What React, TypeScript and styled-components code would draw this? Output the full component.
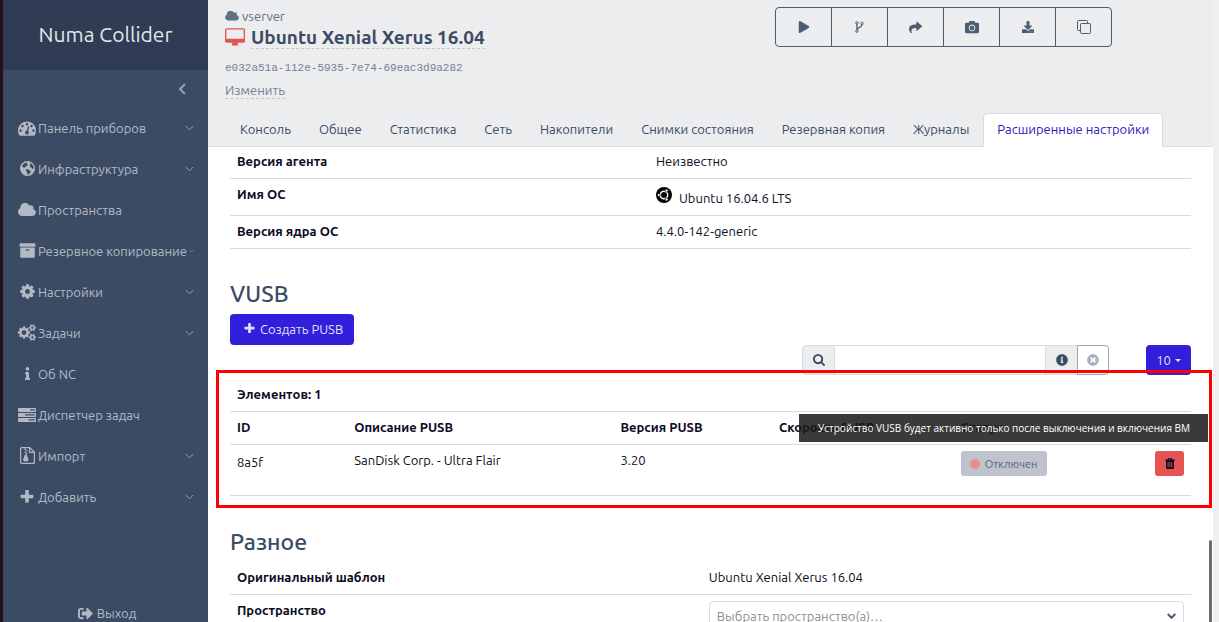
import React from "react";
import styled, { createGlobalStyle, css } from "styled-components";
import {
  FaCamera,
  FaDownload,
  FaInfo,
  FaInfoCircle,
  FaPlay,
  FaShare,
  FaSignOutAlt,
  FaTimesCircle,
} from "react-icons/fa";

const GlobalStyle = createGlobalStyle`
  *, *::before, *::after { box-sizing: border-box; }
  body {
    margin: 0;
    font-family: Ubuntu, "Noto Sans", sans-serif;
    font-size: 13px;
    line-height: 20px;
    color: #0d0c22;
    background: #ffffff;
  }
  button, input, select { font: inherit; color: inherit; margin: 0; }
  a { color: inherit; text-decoration: none; }
`;

/* ---------- icons ---------- */

const Glyph = styled.svg<{ $w: number; $h?: number }>`
  display: block;
  flex: none;
  width: ${(p) => p.$w}px;
  height: ${(p) => p.$h ?? p.$w}px;
  fill: currentColor;
`;

type IconProps = { w?: number; h?: number };

const DashboardIcon = ({ w = 18 }: IconProps) => (
  <Glyph $w={w} viewBox="0 0 1792 1792" aria-hidden="true">
    <path d="M384 1152q0-53-37.5-90.5t-90.5-37.5-90.5 37.5-37.5 90.5 37.5 90.5 90.5 37.5 90.5-37.5 37.5-90.5zm192-448q0-53-37.5-90.5t-90.5-37.5-90.5 37.5-37.5 90.5 37.5 90.5 90.5 37.5 90.5-37.5 37.5-90.5zm428 481l101-382q6-26-7.5-48.5t-38.5-29.5-48 6.5-30 39.5l-101 382q-60 5-107 43.5t-63 98.5q-20 77 20 146t117 89 146-20 89-117q16-60-6-117t-72-91zm660-33q0-53-37.5-90.5t-90.5-37.5-90.5 37.5-37.5 90.5 37.5 90.5 90.5 37.5 90.5-37.5 37.5-90.5zm-640-640q0-53-37.5-90.5t-90.5-37.5-90.5 37.5-37.5 90.5 37.5 90.5 90.5 37.5 90.5-37.5 37.5-90.5zm448 192q0-53-37.5-90.5t-90.5-37.5-90.5 37.5-37.5 90.5 37.5 90.5 90.5 37.5 90.5-37.5 37.5-90.5zm320 448q0 261-141 483-19 29-54 29h-1402q-35 0-54-29-141-221-141-483 0-182 71-348t191-286 286-191 348-71 348 71 286 191 191 286 71 348z" />
  </Glyph>
);

const GlobeIcon = () => (
  <Glyph $w={15} viewBox="0 0 16 16" aria-hidden="true">
    <circle cx="8" cy="8" r="8" />
    <g fill="#3c4b64">
      <path d="M3.200 3.600L5.200 2l2.600-.4-.6 1.600 1.300.5-1 1.500L6 5.600 5.200 7.200 3 6.600 2.200 5.200z" />
      <path d="M10.400 2.200l2.200.9 1.700 2.300.6 2.400-1.300.7-1-1.300-1.500-.4-.8-2 .8-1z" />
      <path d="M6.600 8.600l2.200.4 1.900 1.200 1.100 1.400-1.400 1.200-1.200 1.900-1 .3-.3-2.300L6.500 11z" />
    </g>
  </Glyph>
);

const CloudIcon = ({ w = 18, h = 14 }: IconProps) => (
  <Glyph $w={w} $h={h} viewBox="64 192 1936 1408" aria-hidden="true">
    <path d="M1984 1152q0 159-112.500 271.500t-271.500 112.500h-1088q-185 0-316.500-131.500t-131.500-316.500q0-132 71-241.500t187-163.500q-2-28-2-43 0-212 150-362t362-150q158 0 286.500 88t187.500 230q70-62 166-62 106 0 181 75t75 181q0 75-41 138 129 30 213 134.500t84 239.500z" />
  </Glyph>
);

const ArchiveIcon = () => (
  <Glyph $w={17} viewBox="0 0 1792 1792" aria-hidden="true">
    <path d="M1088 832q0-26-19-45t-45-19h-256q-26 0-45 19t-19 45 19 45 45 19h256q26 0 45-19t19-45zm576-192v960q0 26-19 45t-45 19h-1408q-26 0-45-19t-19-45v-960q0-26 19-45t45-19h1408q26 0 45 19t19 45zm64-448v256q0 26-19 45t-45 19h-1536q-26 0-45-19t-19-45v-256q0-26 19-45t45-19h1536q26 0 45 19t19 45z" />
  </Glyph>
);

const CogIcon = () => (
  <Glyph $w={17} viewBox="0 0 1792 1792" aria-hidden="true">
    <path d="M1152 896q0-106-75-181t-181-75-181 75-75 181 75 181 181 75 181-75 75-181zm512-109v222q0 12-8 23t-20 13l-185 28q-19 54-39 91 35 50 107 138 10 12 10 25t-9 23q-27 37-99 108t-94 71q-12 0-26-9l-138-108q-44 23-91 38-16 136-29 186-7 28-36 28h-222q-14 0-24.500-8.500t-11.500-21.500l-28-184q-49-16-90-37l-141 107q-10 9-25 9-14 0-25-11-126-114-165-168-7-10-7-23 0-12 8-23 15-21 51-66.500t54-70.500q-27-50-41-99l-183-27q-13-2-21-12.500t-8-23.500v-222q0-12 8-23t19-13l186-28q14-46 39-92-40-57-107-138-10-12-10-24 0-10 9-23 26-36 98.500-107.500t94.500-71.500q13 0 26 10l138 107q44-23 91-38 16-136 29-186 7-28 36-28h222q14 0 24.500 8.500t11.500 21.500l28 184q49 16 90 37l142-107q9-9 24-9 13 0 25 10 129 119 165 170 7 8 7 22 0 12-8 23-15 21-51 66.500t-54 70.500q26 50 41 98l183 28q13 2 21 12.500t8 23.500z" />
  </Glyph>
);

const CogsIcon = () => (
  <Glyph $w={18} $h={17} viewBox="0 0 1920 1792" aria-hidden="true">
    <path d="M896 896q0-106-75-181t-181-75-181 75-75 181 75 181 181 75 181-75 75-181zm768 512q0-52-38-90t-90-38-90 38-38 90q0 53 37.500 90.500t90.500 37.500 90.500-37.500 37.500-90.500zm0-1024q0-52-38-90t-90-38-90 38-38 90q0 53 37.500 90.500t90.500 37.500 90.500-37.500 37.500-90.500zm-384 421v185q0 10-7 19.500t-16 10.500l-155 24q-11 35-32 76 34 48 90 115 7 11 7 20 0 12-7 19-23 30-82.500 89.500t-78.500 59.500q-11 0-21-7l-115-90q-37 19-77 31-11 108-23 155-7 24-30 24h-186q-11 0-20-7.500t-10-17.500l-23-153q-34-10-75-31l-118 89q-7 7-20 7-11 0-21-8-144-133-144-160 0-9 7-19 10-14 41-53t47-61q-23-44-35-82l-152-24q-10-1-17-9.500t-7-19.500v-185q0-10 7-19.500t16-10.500l155-24q11-35 32-76-34-48-90-115-7-11-7-20 0-12 7-20 22-30 82-89t79-59q11 0 21 7l115 90q34-18 77-32 11-108 23-154 7-24 30-24h186q11 0 20 7.500t10 17.500l23 153q34 10 75 31l118-89q8-7 20-7 11 0 21 8 144 133 144 160 0 8-7 19-12 16-42 54t-45 60q23 48 34 82l152 23q10 2 17 10.500t7 19.500zm640 533v140q0 16-149 31-12 27-30 52 51 113 51 138 0 4-4 7-122 71-124 71-8 0-46-47t-52-68q-20 2-30 2t-30-2q-14 21-52 68t-46 47q-2 0-124-71-4-3-4-7 0-25 51-138-18-25-30-52-149-15-149-31v-140q0-16 149-31 13-29 30-52-51-113-51-138 0-4 4-7 4-2 35-20t59-34 30-16q8 0 46 46.500t52 67.500q20-2 30-2t30 2q51-71 92-112l6-2q4 0 124 70 4 3 4 7 0 25-51 138 17 23 30 52 149 15 149 31zm0-1024v140q0 16-149 31-12 27-30 52 51 113 51 138 0 4-4 7-122 71-124 71-8 0-46-47t-52-68q-20 2-30 2t-30-2q-14 21-52 68t-46 47q-2 0-124-71-4-3-4-7 0-25 51-138-18-25-30-52-149-15-149-31v-140q0-16 149-31 13-29 30-52-51-113-51-138 0-4 4-7 4-2 35-20t59-34 30-16q8 0 46 46.500t52 67.500q20-2 30-2t30 2q51-71 92-112l6-2q4 0 124 70 4 3 4 7 0 25-51 138 17 23 30 52 149 15 149 31z" />
  </Glyph>
);

const TasksIcon = () => (
  <Glyph $w={18} $h={14} viewBox="0 0 18 14" aria-hidden="true">
    <path
      fillRule="evenodd"
      d="M.7 0h16.600q.7 0 .7.700v2.600q0 .7-.7.700H.7q-.7 0-.7-.7V.7Q0 0 .7 0zM12 1.200v1.300h4.800V1.200zM.7 5h16.600q.7 0 .7.700v2.600q0 .7-.7.700H.7q-.7 0-.7-.7V5.700Q0 5 .7 5zM7 6.300v1.300h9.800V6.300zM.7 10h16.600q.7 0 .7.700v2.600q0 .7-.7.700H.7q-.7 0-.7-.7v-2.600q0-.7.7-.7zM10.500 11.300v1.300h6.300v-1.300z"
    />
  </Glyph>
);

const ZipFileIcon = () => (
  <Glyph $w={15} $h={17} viewBox="0 0 15 17" aria-hidden="true">
    <path
      d="M1.600.600h8.200l4.600 4.600v10.200a1 1 0 0 1-1 1H1.600a1 1 0 0 1-1-1V1.600a1 1 0 0 1 1-1zM9.600.800v4.600h4.600"
      fill="none"
      stroke="currentColor"
      strokeWidth="1.200"
    />
    <path d="M4.400 1.600h1.400v1.400H4.400zM5.800 3h1.400v1.400H5.800zM4.400 4.400h1.400v1.400H4.400zM5.800 5.800h1.400v1.400H5.800zM4.900 7.600h1.800l1.700 4.600q.4 2.200-2.600 2.200t-2.600-2.200z" />
  </Glyph>
);

const PlusIcon = ({ w = 16 }: IconProps) => (
  <Glyph $w={w} viewBox="128 128 1536 1536" aria-hidden="true">
    <path d="M1600 736v192q0 40-28 68t-68 28h-416v416q0 40-28 68t-68 28h-192q-40 0-68-28t-28-68v-416h-416q-40 0-68-28t-28-68v-192q0-40 28-68t68-28h416v-416q0-40 28-68t68-28h192q40 0 68 28t28 68v416h416q40 0 68 28t28 68z" />
  </Glyph>
);

const DesktopIcon = () => (
  <Glyph $w={20} $h={19} viewBox="0 0 1920 1792" aria-hidden="true">
    <path d="M1792 992v-832q0-13-9.500-22.500t-22.500-9.500h-1600q-13 0-22.500 9.500t-9.500 22.500v832q0 13 9.500 22.500t22.500 9.500h1600q13 0 22.500-9.500t9.500-22.500zm128-832v1088q0 66-47 113t-113 47h-544q0 37 16 77.500t32 71 16 43.500q0 26-19 45t-45 19h-512q-26 0-45-19t-19-45q0-14 16-44t32-70 16-78h-544q-66 0-113-47t-47-113v-1088q0-66 47-113t113-47h1600q66 0 113 47t47 113z" />
  </Glyph>
);

const SearchIcon = () => (
  <Glyph $w={12} viewBox="64 128 1664 1664" aria-hidden="true">
    <path d="M1216 832q0-185-131.500-316.500t-316.500-131.500-316.500 131.500-131.500 316.500 131.500 316.500 316.500 131.500 316.500-131.500 131.500-316.500zm512 832q0 52-38 90t-90 38q-54 0-90-38l-343-342q-179 124-399 124-143 0-273.500-55.500t-225-150-150-225-55.500-273.500 55.500-273.500 150-225 225-150 273.500-55.500 273.500 55.500 225 150 150 225 55.500 273.500q0 220-124 399l343 343q37 37 37 90z" />
  </Glyph>
);

const ForkIcon = () => (
  <Glyph $w={9} $h={12} viewBox="0 0 9 12" aria-hidden="true">
    <g fill="none" stroke="currentColor">
      <circle cx="1.900" cy="1.900" r="1.200" />
      <circle cx="7" cy="2.400" r="1.200" />
      <circle cx="1.900" cy="10.100" r="1.200" />
      <path d="M1.900 3v6M7 3.600C7 7 2.200 5.600 2.200 8.800" strokeWidth="1.300" />
    </g>
  </Glyph>
);

const CloneIcon = () => (
  <Glyph $w={14} viewBox="0 0 14 14" aria-hidden="true">
    <g fill="none" stroke="currentColor">
      <rect x="3.500" y="3.500" width="10" height="10" rx="1" />
      <path d="M3.500 10.500h-2a1 1 0 0 1-1-1v-8a1 1 0 0 1 1-1h8a1 1 0 0 1 1 1v2" />
    </g>
  </Glyph>
);

const TrashIcon = () => (
  <Glyph $w={10} $h={11} viewBox="0 0 10 11" aria-hidden="true">
    <path
      fillRule="evenodd"
      d="M3.200 0h3.600l.7 1.500H10v1H9V10q0 1-1 1H2q-1 0-1-1V2.500H0v-1h2.500zM3.800.8l-.3.700h3l-.3-.7zM2.700 4v5.300h.8V4zm1.900 0v5.300h.8V4zm1.900 0v5.300h.8V4z"
    />
  </Glyph>
);

const Chevron = ({ w = 9 }: IconProps) => (
  <Glyph $w={w} $h={w > 6 ? 6 : 4} viewBox="0 0 9 6" aria-hidden="true">
    <path d="M.7 1l3.800 3.800L8.300 1" fill="none" stroke="currentColor" />
  </Glyph>
);

const CollapseIcon = () => (
  <Glyph $w={8} $h={12} viewBox="0 0 8 12" aria-hidden="true">
    <path d="M7 1L2 6l5 5" fill="none" stroke="currentColor" strokeWidth="2.200" />
  </Glyph>
);

const UbuntuIcon = () => (
  <Glyph $w={16} viewBox="0 0 16 16" aria-hidden="true">
    <circle cx="8" cy="8" r="8" fill="#000" />
    <circle cx="8" cy="8" r="3.700" fill="none" stroke="#fff" strokeWidth="1.500" />
    <g fill="#fff" stroke="#000" strokeWidth=".7">
      <circle cx="2.800" cy="8" r="1.500" />
      <circle cx="10.600" cy="3.500" r="1.500" />
      <circle cx="10.600" cy="12.500" r="1.500" />
    </g>
  </Glyph>
);

/* ---------- shell ---------- */

const Shell = styled.div`
  display: flex;
  height: 100vh;
  overflow: hidden;
  border-left: 3px solid #25111d;
`;

const Sidebar = styled.aside`
  display: flex;
  flex-direction: column;
  flex: none;
  width: 205px;
  background: #3c4b64;
  color: #b3b9c3;
`;

const Brand = styled.div`
  display: flex;
  align-items: center;
  justify-content: center;
  height: 70px;
  padding-bottom: 2px;
  flex: none;
  background: #303c54;
  color: #e4e6ea;
  font-size: 21px;
`;

const Collapse = styled.button`
  align-self: flex-end;
  display: flex;
  align-items: center;
  height: 37px;
  padding: 0 22px;
  border: 0;
  background: none;
  color: #929bab;
`;

const Nav = styled.nav`
  display: flex;
  flex-direction: column;
`;

const NavLink = styled.a`
  display: flex;
  align-items: center;
  height: 41px;
  padding: 0 14px 0 15px;
  white-space: nowrap;
`;

const NavIcon = styled.span`
  display: flex;
  justify-content: center;
  width: 18px;
  margin-right: 2px;
`;

const NavArrow = styled.span`
  margin-left: auto;
  color: #98a1af;
`;

const Logout = styled.a`
  display: flex;
  align-items: center;
  justify-content: center;
  gap: 4px;
  height: 18px;
  margin-top: auto;
  padding-left: 3px;
`;

const Main = styled.main`
  position: relative;
  display: flex;
  flex-direction: column;
  flex: 1;
  min-width: 0;
  border-right: 6px solid #f0f0f0;
`;

/* ---------- machine header ---------- */

const Header = styled.header`
  display: flex;
  flex-direction: column;
  justify-content: space-between;
  flex: none;
  height: 147px;
  background: #ebedef;
  border-bottom: 1px solid #d8dbe0;
`;

const HeaderTop = styled.div`
  display: flex;
  justify-content: space-between;
  align-items: flex-start;
  padding: 7px 101px 0 17px;
`;

const Identity = styled.div`
  display: flex;
  flex-direction: column;
  align-items: flex-start;
  color: #768192;
`;

const Host = styled.a`
  display: flex;
  align-items: center;
  gap: 3px;
  height: 18px;
  color: #636f83;
`;

const TitleRow = styled.div`
  display: flex;
  align-items: center;
  gap: 6px;
  color: #e55353;
`;

const Title = styled.h1`
  margin: 0;
  padding-top: 1px;
  font-size: 19px;
  line-height: 22px;
  font-weight: 600;
  color: #3c4b64;
  border-bottom: 1px dashed #c2c6cc;
`;

const Uuid = styled.code`
  margin: 9px 0 5px;
  font-family: "Liberation Mono", monospace;
  font-size: 11px;
  line-height: 20px;
`;

const EditLink = styled.a`
  line-height: 14px;
  padding-bottom: 1px;
  border-bottom: 1px dashed #c2c6cc;
`;

const ButtonGroup = styled.div`
  display: flex;
  height: 40px;
  border: 1px solid #4f5d73;
  border-radius: 4px;
`;

const ToolButton = styled.button`
  display: flex;
  align-items: center;
  justify-content: center;
  width: 56px;
  padding: 0;
  border: 0;
  background: none;
  color: #4f5d73;
  font-size: 13px;
  & + & { border-left: 1px solid #4f5d73; }
  &:first-child { width: 55px; }
`;

const Tabs = styled.nav`
  display: flex;
  margin: 0 0 -1px 18px;
`;

const Tab = styled.a<{ $active?: boolean }>`
  padding: 5px 13px 8px;
  border: 1px solid transparent;
  border-bottom: 0;
  border-radius: 4px 4px 0 0;
  color: #3c4b64;
  white-space: nowrap;
  ${(p) =>
    p.$active &&
    css`
      background: #ffffff;
      border-color: #d8dbe0;
      color: #2a1ab9;
    `}
`;

/* ---------- content ---------- */

const Content = styled.div`
  flex: 1;
  min-height: 0;
  overflow: hidden;
  padding: 0 22px;
`;

const ScrollThumb = styled.div`
  position: absolute;
  right: 1px;
  bottom: 0;
  width: 3px;
  height: 82px;
  border-radius: 2px 2px 0 0;
  background: #6c6c6c;
`;

const Table = styled.table`
  width: 100%;
  table-layout: fixed;
  border-collapse: collapse;
`;

const AgentTable = styled(Table)`
  margin-top: -1px;
`;

const Row = styled.tr`
  border-bottom: 1px solid #d8dbe0;
`;

const HeadCell = styled.th`
  padding: 5px 7px 7px;
  text-align: left;
  vertical-align: top;
  font-weight: 700;
`;

const Cell = styled.td`
  padding: 5px 7px 7px;
  vertical-align: top;
`;

const IdCell = styled(Cell)`
  padding: 7px 7px 23px;
`;

const OsName = styled.span`
  display: flex;
  align-items: flex-start;
  gap: 7px;
  padding-top: 4px;
  svg { margin-top: -1px; }
`;

const Heading = styled.h2<{ $space: number }>`
  margin: ${(p) => p.$space}px 0 5px;
  font-size: 23px;
  line-height: 30px;
  font-weight: 500;
  color: #3c4b64;
`;

const CreateButton = styled.button`
  display: flex;
  align-items: center;
  gap: 5px;
  height: 31px;
  padding: 0 11px 2px 14px;
  border: 0;
  border-radius: 4px;
  background: #321fdb;
  color: #e2dffa;
`;

const FilterBar = styled.div`
  display: flex;
  justify-content: flex-end;
  gap: 37px;
  height: 30px;
`;

const SearchGroup = styled.div`
  display: flex;
  width: 307px;
`;

const Addon = styled.label`
  display: flex;
  align-items: center;
  justify-content: center;
  width: 33px;
  border: 1px solid #d8dbe0;
  border-radius: 4px 0 0 4px;
  background: #ebedef;
  color: #3c4b64;
`;

const SearchInput = styled.input`
  flex: 1;
  min-width: 0;
  padding: 0 8px;
  border: 1px solid #d8dbe0;
  border-width: 1px 0;
  outline: 0;
  background: #ffffff;
`;

const InfoButton = styled.button`
  display: flex;
  align-items: center;
  justify-content: center;
  width: 32px;
  padding: 0;
  border: 1px solid #d8dbe0;
  border-right: 0;
  background: #ebedef;
  color: #3c4b64;
`;

const ClearButton = styled.button`
  display: flex;
  align-items: center;
  justify-content: center;
  width: 32px;
  padding: 0;
  border: 1px solid #9da5b1;
  border-radius: 0 4px 4px 0;
  background: #ffffff;
  color: #a9b0bb;
`;

const PageSize = styled.button`
  display: flex;
  align-items: center;
  justify-content: center;
  gap: 4px;
  width: 45px;
  padding: 0;
  border: 0;
  border-radius: 4px;
  background: #321fdb;
  color: #e2dffa;
  &::after {
    content: "";
    border: 3px solid transparent;
    border-top-color: currentColor;
    border-bottom: 0;
  }
`;

const Listing = styled.section`
  position: relative;
  padding-top: 4px;
`;

const Caption = styled.caption`
  padding: 5px 7px 7px;
  border-bottom: 1px solid #d8dbe0;
  text-align: left;
  font-weight: 700;
`;

const Highlight = styled.div`
  position: absolute;
  inset: -5px -21px -12px -14px;
  border: 3px solid #ff0000;
  pointer-events: none;
`;

const Tooltip = styled.div`
  position: absolute;
  top: 39px;
  right: -17px;
  padding: 4px 18px 4px 19px;
  background: rgba(26, 26, 26, 0.86);
  color: #ffffff;
  font-family: "Open Sans", sans-serif;
  font-size: 10px;
  white-space: nowrap;
`;

const Status = styled.button`
  display: flex;
  align-items: center;
  justify-content: center;
  gap: 5px;
  width: 86px;
  height: 25px;
  margin-top: 1px;
  padding: 0;
  border: 0;
  border-radius: 3px;
  background: #bec3cd;
  color: #5c6478;
  font-size: 11px;
  &::before {
    content: "";
    width: 10px;
    height: 10px;
    border-radius: 50%;
    background: #ee8b8d;
  }
`;

const DeleteButton = styled.button`
  display: flex;
  align-items: center;
  justify-content: center;
  width: 29px;
  height: 25px;
  margin: 1px 0 0 auto;
  padding: 0;
  border: 0;
  border-radius: 3px;
  background: #e55353;
  color: #0d0c22;
`;

const SelectWrap = styled.div`
  position: relative;
  margin-top: 1px;
  color: #4f5d73;
  svg {
    position: absolute;
    right: 8px;
    top: 12px;
  }
  path { stroke-width: 2px; }
`;

const Select = styled.select`
  display: block;
  width: 100%;
  height: 32px;
  padding: 0 7px 2px;
  border: 1px solid #d8dbe0;
  border-radius: 4px;
  appearance: none;
  background: #ffffff;
  color: #8f8f8f;
`;

/* ---------- data ---------- */

type NavEntry = { label: string; icon: React.ReactNode; arrow?: number };

const navEntries: NavEntry[] = [
  { label: "Панель приборов", icon: <DashboardIcon />, arrow: 9 },
  { label: "Инфраструктура", icon: <GlobeIcon />, arrow: 9 },
  { label: "Пространства", icon: <CloudIcon /> },
  { label: "Резервное копирование", icon: <ArchiveIcon />, arrow: 5 },
  { label: "Настройки", icon: <CogIcon />, arrow: 9 },
  { label: "Задачи", icon: <CogsIcon />, arrow: 9 },
  { label: "Об NC", icon: <FaInfo size={13} /> },
  { label: "Диспетчер задач", icon: <TasksIcon /> },
  { label: "Импорт", icon: <ZipFileIcon />, arrow: 9 },
  { label: "Добавить", icon: <PlusIcon w={14} />, arrow: 9 },
];

const tools = [
  { label: "Запустить", icon: <FaPlay size={12} /> },
  { label: "Ветвление", icon: <ForkIcon /> },
  { label: "Мигрировать", icon: <FaShare /> },
  { label: "Снимок", icon: <FaCamera size={14} /> },
  { label: "Экспорт", icon: <FaDownload size={12} /> },
  { label: "Клонировать", icon: <CloneIcon /> },
];

const tabs = [
  "Консоль",
  "Общее",
  "Статистика",
  "Сеть",
  "Накопители",
  "Снимки состояния",
  "Резервная копия",
  "Журналы",
  "Расширенные настройки",
];

const usbColumns = [
  { label: "ID", width: "12.2%" },
  { label: "Описание PUSB", width: "27.7%" },
  { label: "Версия PUSB", width: "16.5%" },
  { label: "Скорость PUSB", width: "18.9%" },
  { label: "Статус", width: "16.7%" },
  { label: "", width: "8%" },
];

export default function App() {
  return (
    <>
      <GlobalStyle />
      <Shell>
        <Sidebar>
          <Brand>Numa Collider</Brand>
          <Collapse aria-label="Свернуть меню">
            <CollapseIcon />
          </Collapse>
          <Nav>
            {navEntries.map((entry) => (
              <NavLink href="#" key={entry.label}>
                <NavIcon>{entry.icon}</NavIcon>
                {entry.label}
                {entry.arrow && (
                  <NavArrow>
                    <Chevron w={entry.arrow} />
                  </NavArrow>
                )}
              </NavLink>
            ))}
          </Nav>
          <Logout href="#">
            <FaSignOutAlt size={15} />
            Выход
          </Logout>
        </Sidebar>

        <Main>
          <Header>
            <HeaderTop>
              <Identity>
                <Host href="#">
                  <CloudIcon w={14} h={10} />
                  vserver
                </Host>
                <TitleRow>
                  <DesktopIcon />
                  <Title>Ubuntu Xenial Xerus 16.04</Title>
                </TitleRow>
                <Uuid>e032a51a-112e-5935-7e74-69eac3d9a282</Uuid>
                <EditLink href="#">Изменить</EditLink>
              </Identity>
              <ButtonGroup>
                {tools.map((tool) => (
                  <ToolButton key={tool.label} aria-label={tool.label}>
                    {tool.icon}
                  </ToolButton>
                ))}
              </ButtonGroup>
            </HeaderTop>
            <Tabs>
              {tabs.map((tab, i) => (
                <Tab href="#" key={tab} $active={i === tabs.length - 1}>
                  {tab}
                </Tab>
              ))}
            </Tabs>
          </Header>

          <Content>
            <AgentTable>
              <colgroup>
                <col style={{ width: "43.6%" }} />
                <col />
              </colgroup>
              <tbody>
                <Row>
                  <HeadCell scope="row">Версия агента</HeadCell>
                  <Cell>Неизвестно</Cell>
                </Row>
                <Row>
                  <HeadCell scope="row">Имя ОС</HeadCell>
                  <Cell>
                    <OsName>
                      <UbuntuIcon />
                      Ubuntu 16.04.6 LTS
                    </OsName>
                  </Cell>
                </Row>
                <Row>
                  <HeadCell scope="row">Версия ядра ОС</HeadCell>
                  <Cell>4.4.0-142-generic</Cell>
                </Row>
              </tbody>
            </AgentTable>

            <Heading $space={30}>VUSB</Heading>
            <CreateButton>
              <PlusIcon w={11} />
              Создать PUSB
            </CreateButton>

            <FilterBar>
              <SearchGroup>
                <Addon htmlFor="usb-filter" aria-label="Поиск">
                  <SearchIcon />
                </Addon>
                <SearchInput id="usb-filter" type="text" />
                <InfoButton aria-label="Справка">
                  <FaInfoCircle size={12} />
                </InfoButton>
                <ClearButton aria-label="Очистить">
                  <FaTimesCircle size={12} />
                </ClearButton>
              </SearchGroup>
              <PageSize>10</PageSize>
            </FilterBar>

            <Listing>
              <Table>
                <Caption>Элементов: 1</Caption>
                <colgroup>
                  {usbColumns.map((c, i) => (
                    <col key={i} style={{ width: c.width }} />
                  ))}
                </colgroup>
                <thead>
                  <Row>
                    {usbColumns.map((c, i) => (
                      <HeadCell scope="col" key={i}>
                        {c.label}
                      </HeadCell>
                    ))}
                  </Row>
                </thead>
                <tbody>
                  <Row>
                    <IdCell>8a5f</IdCell>
                    <Cell>SanDisk Corp. - Ultra Flair</Cell>
                    <Cell>3.20</Cell>
                    <Cell />
                    <Cell>
                      <Status disabled>Отключен</Status>
                    </Cell>
                    <Cell>
                      <DeleteButton aria-label="Удалить">
                        <TrashIcon />
                      </DeleteButton>
                    </Cell>
                  </Row>
                </tbody>
              </Table>
              <Highlight />
              <Tooltip role="tooltip">
                Устройство VUSB будет активно только после выключения и включения ВМ
              </Tooltip>
            </Listing>

            <Heading $space={31}>Разное</Heading>
            <Table>
              <colgroup>
                <col style={{ width: "49.1%" }} />
                <col />
              </colgroup>
              <tbody>
                <Row>
                  <HeadCell scope="row">Оригинальный шаблон</HeadCell>
                  <Cell>Ubuntu Xenial Xerus 16.04</Cell>
                </Row>
                <Row>
                  <HeadCell scope="row">
                    <label htmlFor="space">Пространство</label>
                  </HeadCell>
                  <Cell>
                    <SelectWrap>
                      <Select id="space" defaultValue="">
                        <option value="">Выбрать пространство(а)…</option>
                      </Select>
                      <Chevron />
                    </SelectWrap>
                  </Cell>
                </Row>
              </tbody>
            </Table>
          </Content>
          <ScrollThumb />
        </Main>
      </Shell>
    </>
  );
}
